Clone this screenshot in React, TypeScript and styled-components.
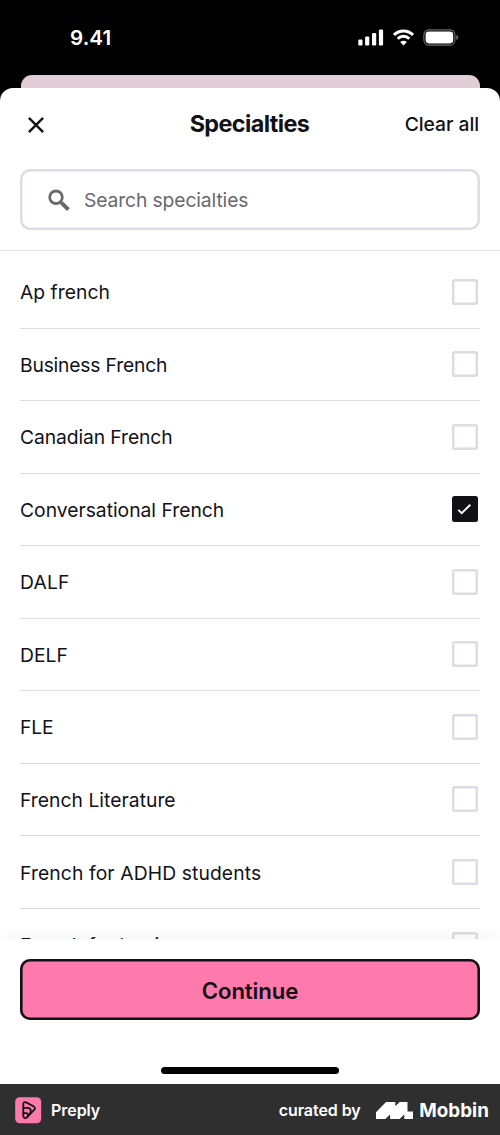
import React, { useState } from "react";
import styled, { createGlobalStyle } from "styled-components";

const ink = "#121117";
const line = "#dcdce4";

const GlobalStyle = createGlobalStyle`
  *, *::before, *::after { box-sizing: border-box; }
  body { margin: 0; background: #000; font-family: Inter, "Liberation Sans", sans-serif; color: ${ink}; }
  button { border: 0; padding: 0; background: none; font: inherit; color: inherit; cursor: pointer; }
`;

const Screen = styled.div`
  width: 500px;
  height: 1135px;
  display: flex;
  flex-direction: column;
  overflow: hidden;
  background: #000;
`;

const StatusBar = styled.header`
  flex: none;
  height: 75px;
  padding: 0 41px 0 70px;
  display: flex;
  align-items: center;
  justify-content: space-between;
`;

const Clock = styled.span`
  color: #fff;
  font-size: 20.6px;
  font-weight: 600;
  letter-spacing: 0.1px;
`;

const StatusIcons = styled.div`
  display: flex;
  align-items: center;
  gap: 9px;
  svg { display: block; }
`;

const PreviousSheet = styled.div`
  flex: none;
  height: 13px;
  margin: 0 20.5px;
  border-radius: 11px 11px 0 0;
  background: #e2ced6;
`;

const Sheet = styled.main`
  flex: 1;
  min-height: 0;
  display: flex;
  flex-direction: column;
  overflow: hidden;
  border-radius: 13px 13px 0 0;
  background: #fff;
`;

const TitleBar = styled.div`
  flex: none;
  height: 81px;
  padding: 0 21px 8px 28px;
  display: grid;
  grid-template-columns: 100px 1fr 108px;
  align-items: center;
`;

const CloseButton = styled.button`
  width: 16px;
  height: 16px;
  svg { display: block; }
`;

const Title = styled.h1`
  margin: 0 0 2px;
  text-align: center;
  font-size: 23.4px;
  font-weight: 700;
  letter-spacing: -0.6px;
`;

const ClearButton = styled.button`
  justify-self: end;
  margin-bottom: 2px;
  font-size: 19.3px;
  font-weight: 500;
  letter-spacing: -0.05px;
  white-space: nowrap;
`;

const SearchArea = styled.div`
  flex: none;
  height: 82px;
  padding: 0 20px 20px;
  border-bottom: 1px solid #e4e4e8;
`;

const SearchField = styled.label`
  height: 61px;
  padding-left: 28px;
  display: flex;
  align-items: center;
  gap: 14px;
  border-radius: 10px;
  box-shadow: inset 0 0 0 2.5px ${line};
  color: #69686f;
  font-size: 19.3px;
  letter-spacing: -0.12px;
  svg { display: block; }
`;

const List = styled.ul`
  flex: 1;
  min-height: 0;
  margin: 0;
  padding: 5px 20px 0;
  overflow: hidden;
  list-style: none;
`;

const Item = styled.li`
  height: 72.54px;
  padding-right: 2px;
  display: flex;
  align-items: center;
  justify-content: space-between;
  border-bottom: 1px solid ${line};
`;

const ItemLabel = styled.span<{ $track: number }>`
  padding-top: 1px;
  font-size: 19.3px;
  letter-spacing: ${(p) => p.$track}px;
  white-space: nowrap;
`;

const Checkbox = styled.button<{ $on: boolean }>`
  width: 26px;
  height: 26px;
  border-radius: 2.5px;
  background: ${(p) => (p.$on ? ink : "#fff")};
  box-shadow: ${(p) => (p.$on ? "none" : `inset 0 0 0 2.5px ${line}`)};
  svg { display: block; }
`;

const ActionBar = styled.div`
  flex: none;
  height: 145px;
  padding: 20px 20px 10px;
  display: flex;
  flex-direction: column;
  align-items: center;
  justify-content: space-between;
  background: #fff;
  box-shadow: 0 -2px 16px rgba(18, 17, 23, 0.05);
  z-index: 1;
`;

const ContinueButton = styled.button`
  width: 100%;
  height: 61px;
  padding-top: 1px;
  border-radius: 10px;
  background: #ff7aac;
  box-shadow: inset 0 0 0 2.6px ${ink};
  font-size: 22.2px;
  font-weight: 600;
  letter-spacing: -0.1px;
`;

const HomeIndicator = styled.div`
  width: 178px;
  height: 7px;
  border-radius: 4px;
  background: #000;
`;

const Credits = styled.footer`
  flex: none;
  height: 51px;
  padding: 1px 11px 0 15px;
  display: flex;
  align-items: center;
  background: #2f2f2f;
  color: #fff;
  svg { display: block; }
`;

const AppName = styled.span`
  margin-left: 9px;
  font-size: 16px;
  font-weight: 600;
  letter-spacing: -0.05px;
`;

const Curated = styled.span`
  margin-left: auto;
  margin-right: 15.5px;
  font-size: 16px;
  font-weight: 600;
  letter-spacing: -0.05px;
`;

const Brand = styled.span`
  margin-left: 6px;
  font-size: 18.8px;
  font-weight: 700;
  letter-spacing: 0.05px;
`;

const Signal = () => (
  <svg width="26" height="17" viewBox="0 0 26 17" fill="#fff">
    <rect x="0.3" y="10.5" width="4.2" height="6" rx="1.2" />
    <rect x="7.1" y="7.5" width="4.2" height="9" rx="1.2" />
    <rect x="14" y="4" width="4.2" height="12.5" rx="1.2" />
    <rect x="20.9" y="0.5" width="4.2" height="16" rx="1.2" />
  </svg>
);

const Wifi = () => (
  <svg width="21" height="17" viewBox="0 0 21 17">
    <g fill="none" stroke="#fff" strokeWidth="2.9">
      <path d="M1 5.9a13.4 13.4 0 0 1 19 0" />
      <path d="M4.7 9.7a8.2 8.2 0 0 1 11.6 0" />
    </g>
    <path fill="#fff" d="M10.5 16.4 7.2 13a4.7 4.7 0 0 1 6.6 0z" />
  </svg>
);

const Battery = () => (
  <svg width="36" height="17" viewBox="0 0 36 17">
    <rect x="0.9" y="0.9" width="31" height="15.2" rx="4.8" fill="none" stroke="#6e6e6e" strokeWidth="1.1" />
    <rect x="2.6" y="2.6" width="27.6" height="11.8" rx="3.3" fill="#fff" />
    <path d="M33.4 6v5c1.1-.4 1.7-1.4 1.7-2.5s-.6-2.1-1.7-2.5z" fill="#7d7d7d" />
  </svg>
);

const Cross = () => (
  <svg width="16" height="16" viewBox="0 0 16 16" fill="none" stroke={ink} strokeWidth="2.4">
    <path d="M0.9 0.9 15.1 15.1M15.1 0.9 0.9 15.1" />
  </svg>
);

const Magnifier = () => (
  <svg width="22" height="22" viewBox="0 0 22 22" fill="none" stroke="#69686f">
    <circle cx="8" cy="8.3" r="6.3" strokeWidth="2.8" />
    <path d="M12.4 12.7 14.6 14.9" strokeWidth="2.8" />
    <path d="M13.6 13.9 20.4 20.6" strokeWidth="4" />
  </svg>
);

const Tick = () => (
  <svg width="26" height="26" viewBox="0 0 26 26" fill="none" stroke="#fff" strokeWidth="1.9">
    <path d="M6.3 13.9 9.7 17.2 18.3 8.7" />
  </svg>
);

const PreplyLogo = () => (
  <svg width="27" height="27" viewBox="0 0 27 27">
    <rect x="0.2" y="0.2" width="26" height="26" rx="4.5" fill="#ff7aac" />
    <g fill="none" stroke={ink} strokeWidth="1.8" strokeLinejoin="round" strokeLinecap="round">
      <path d="M8.300 19V7.200C8.300 5.300 9.700 4.700 11.200 5.400L18.500 9.300C20.300 10.300 20.400 12.100 18.900 13.200L11.800 20.600C10.400 21.800 8.300 21 8.300 19Z" />
      <path d="M8.300 10.800H12.500C16.300 10.800 16.700 14.600 14.400 17.200" />
      <path d="M8.300 16.200H11.200C13.200 16.200 13.300 18.400 12.300 19.600" />
    </g>
  </svg>
);

const MobbinLogo = () => (
  <svg width="37" height="17" viewBox="0 0 37 17" fill="#fff">
    <path d="M0 10.3 10 0h9.400v4.200L23.500 0h8v9.400H37V17h-8.700v-4.600L23.500 17h-9.400v-4.600L9.300 17H0z" />
  </svg>
);

const specialties: { name: string; track: number }[] = [
  { name: "Ap french", track: 0.03 },
  { name: "Business French", track: -0.19 },
  { name: "Canadian French", track: -0.1 },
  { name: "Conversational French", track: -0.01 },
  { name: "DALF", track: 0.2 },
  { name: "DELF", track: 0.05 },
  { name: "FLE", track: -0.1 },
  { name: "French Literature", track: 0.03 },
  { name: "French for ADHD students", track: 0.11 },
  { name: "French for beginners", track: 0.05 },
];

export default function App() {
  const [selected, setSelected] = useState<string[]>(["Conversational French"]);
  const toggle = (name: string) =>
    setSelected((s) => (s.includes(name) ? s.filter((n) => n !== name) : [...s, name]));

  return (
    <Screen>
      <GlobalStyle />
      <StatusBar>
        <Clock>9.41</Clock>
        <StatusIcons>
          <Signal />
          <Wifi />
          <Battery />
        </StatusIcons>
      </StatusBar>
      <PreviousSheet />
      <Sheet>
        <TitleBar>
          <CloseButton><Cross /></CloseButton>
          <Title>Specialties</Title>
          <ClearButton onClick={() => setSelected([])}>Clear all</ClearButton>
        </TitleBar>
        <SearchArea>
          <SearchField><Magnifier />Search specialties</SearchField>
        </SearchArea>
        <List>
          {specialties.map(({ name, track }) => {
            const on = selected.includes(name);
            return (
              <Item key={name}>
                <ItemLabel $track={track}>{name}</ItemLabel>
                <Checkbox $on={on} onClick={() => toggle(name)}>{on && <Tick />}</Checkbox>
              </Item>
            );
          })}
        </List>
        <ActionBar>
          <ContinueButton>Continue</ContinueButton>
          <HomeIndicator />
        </ActionBar>
      </Sheet>
      <Credits>
        <PreplyLogo />
        <AppName>Preply</AppName>
        <Curated>curated by</Curated>
        <MobbinLogo />
        <Brand>Mobbin</Brand>
      </Credits>
    </Screen>
  );
}
